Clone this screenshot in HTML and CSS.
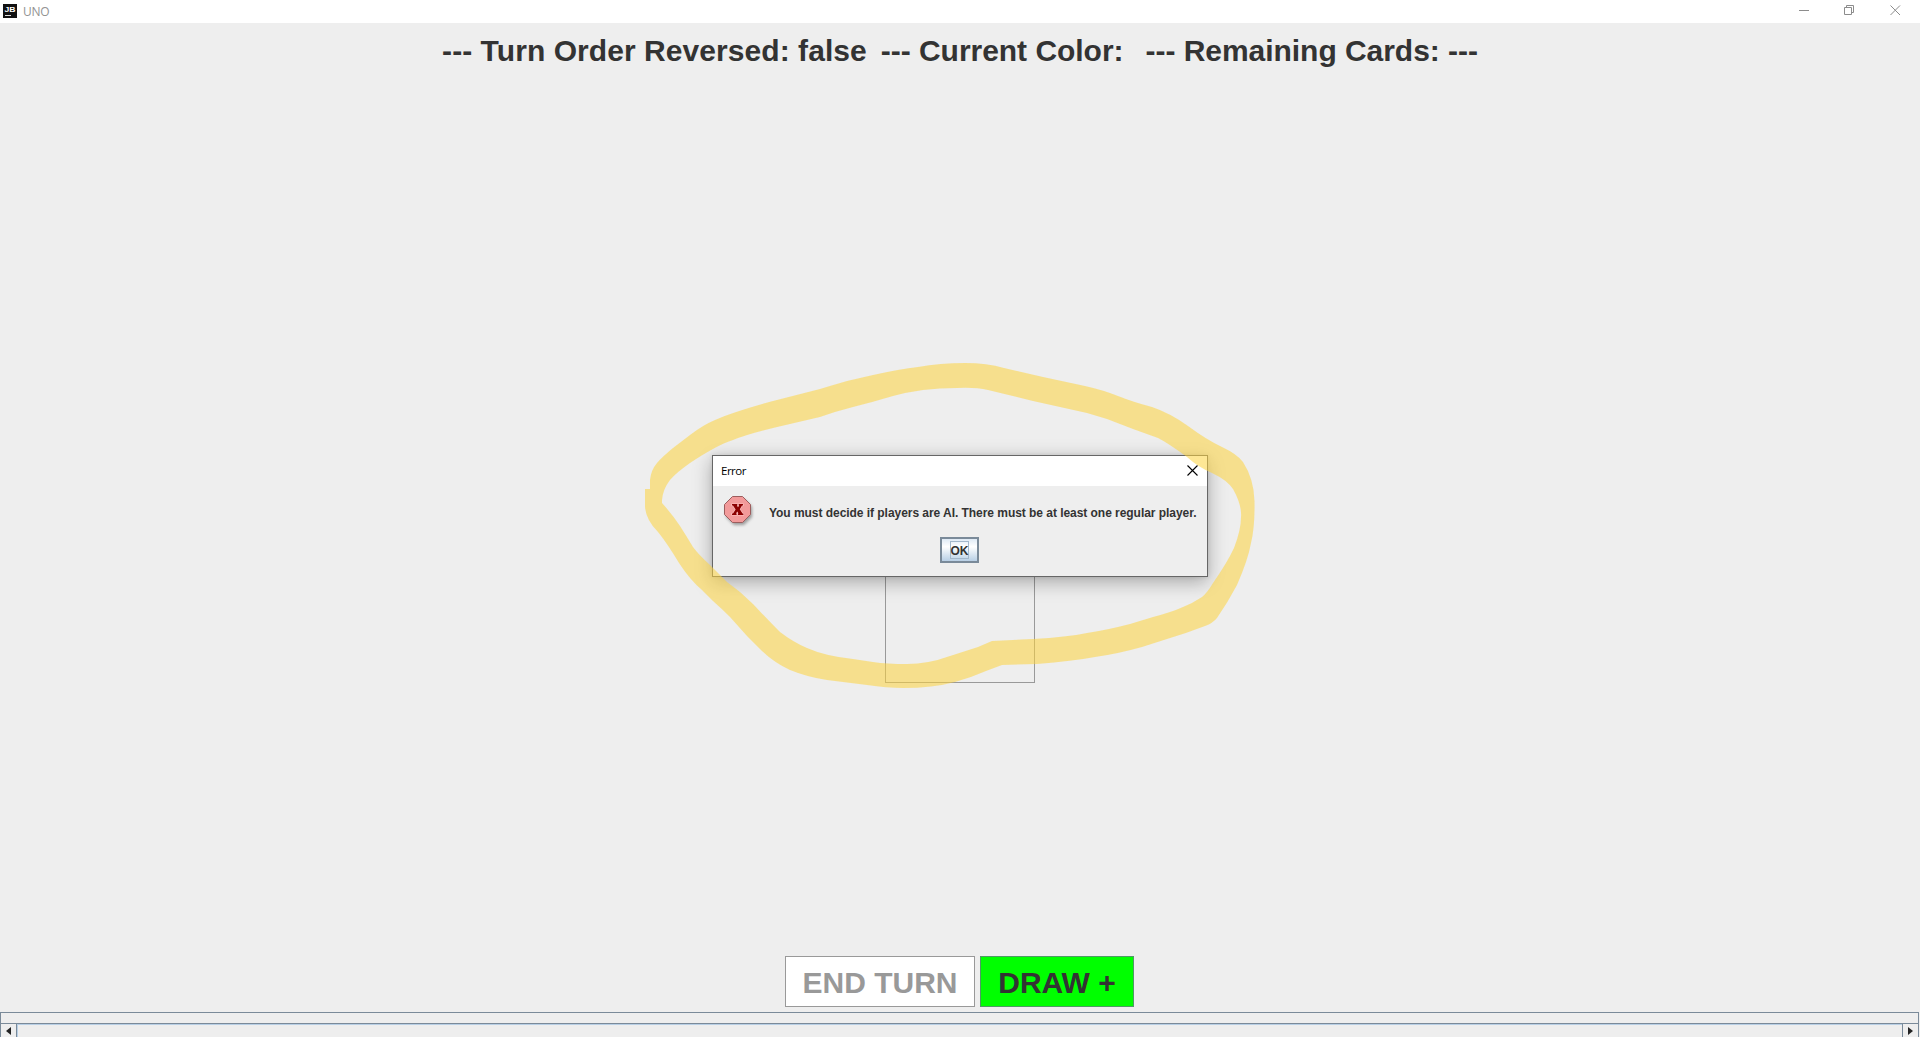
FILE: index.html
```html
<!DOCTYPE html>
<html lang="en">
<head>
<meta charset="utf-8">
<title>UNO</title>
<link rel="stylesheet" href="styles.css">
</head>
<body>
<div class="window">
  <header class="titlebar">
    <svg class="app-icon" width="14" height="14" viewBox="0 0 14 14"><rect width="14" height="14" fill="#111"/><text class="app-letters" x="1.500" y="8" textLength="11" lengthAdjust="spacingAndGlyphs">JB</text><rect x="2" y="11" width="6" height="1" fill="#ddd"/></svg>
    <span class="app-name">UNO</span>
    <svg class="controls" width="104" height="23" viewBox="0 0 104 23" fill="none" stroke="#8c8c8c"><path d="M1 10.500h10M46.500 7.500h7v7h-7zM48.500 7.500v-2h7v7h-2M92.500 5.500l9.500 9.500M102 5.500l-9.500 9.500"/></svg>
  </header>
  <main class="board">
    <h1 class="status"><span class="reversed">--- Turn Order Reversed: false</span><span class="color">--- Current Color:</span><span class="remaining">--- Remaining Cards: ---</span></h1>
    <div class="table"><div class="pile"></div></div>
    <div class="actions">
      <button class="action end-turn" disabled><span>END TURN</span></button>
      <button class="action draw"><span>DRAW +</span></button>
    </div>
  </main>
  <footer class="hand">
    <div class="hand-view"></div>
    <div class="scrollbar">
      <div class="arrow arrow-left"><svg width="5" height="8" viewBox="0 0 5 8"><path d="M5 0v8L0 4z"/></svg></div>
      <div class="track"></div>
      <div class="arrow arrow-right"><svg width="5" height="8" viewBox="0 0 5 8"><path d="M0 0v8l5-4z"/></svg></div>
    </div>
  </footer>
</div>

<section class="dialog">
  <div class="dialog-title"><span>Error</span><svg width="11" height="11" viewBox="0 0 11 11" stroke="#000" stroke-width="1.100"><path d="M.5.5l10 10M10.500.5l-10 10"/></svg></div>
  <div class="dialog-body">
    <div class="message-row">
      <svg class="error-icon" width="32" height="32" viewBox="0 0 32 32">
        <path class="icon-shadow" d="M10 3h10l8 8v10l-8 8H10l-8-8V11z"/>
        <path d="M8.500.5h10l8 8v10l-8 8h-10l-8-8v-10z" fill="#f29a9a" stroke="#9c5d5d"/>
        <path d="M8 8h5.300v1.500h-.4l1.100 1.800 1.200-1.800h-.5V8H19v1.500h-1l-2.200 3.700 2.700 4.300h.9V19h-5.500v-1.500h.5l-1.100-2-1.300 2h.6V19H8v-1.500h1l2.600-4L9 9.500H8z" fill="#8b0000" stroke="#ffc4c4" stroke-width="1.200" paint-order="stroke"/>
      </svg>
      <svg class="message" width="430" height="18"><text x="0" y="14" textLength="427.500">You must decide if players are AI. There must be at least one regular player.</text></svg>
    </div>
    <button class="ok"><span>OK</span></button>
  </div>
</section>

<svg class="marker" width="1920" height="1037" viewBox="0 0 1920 1037">
  <path fill-rule="evenodd" d="M645 489H650V480Q651 470 657 463Q662 457 673 448L690 435Q703 425 715 420Q733 412 773 401L820 389Q833 385 847 381Q860 378 873 375Q900 369 918 367Q940 363 965 363Q987 363 1004 368L1043 377L1085 386Q1103 390 1118 396Q1133 402 1152 407Q1170 413 1188 426Q1207 440 1222 447Q1237 454 1243 462Q1254 479 1254.500 501Q1255 527 1251 543Q1248 560 1237 585Q1228 602 1217 618Q1213 623 1205 626Q1187 633 1167 639L1142 647Q1117 654 1095 657Q1073 661 1037 664L1002 665L986 671Q970 678 955 682Q933 688 903 688Q887 688 867 685L827 680Q807 677 790 670Q773 662 760 649L747 636L730 617Q722 609 713 601L702 590Q690 580 679 563Q667 543 658 532Q646 520 645 507Z
  M662 500Q663 489 670 480Q677 472 690 463Q717 445 733 440Q750 433 790 424L820 417Q837 411 853 407Q873 402 893 396Q908 392 923 390Q940 388 957 388Q975 387 988 390L1033 401L1087 413L1107 419L1133 429L1158 438Q1168 443 1187 457Q1198 467 1212 473Q1227 480 1233 489Q1242 505 1241 517Q1241 530 1234 548Q1227 563 1213 583Q1207 593 1202 597Q1193 603 1183 607Q1172 612 1153 617L1130 624Q1107 630 1087 633Q1067 637 1033 639L992 641L978 647L950 656Q928 664 907 664Q887 664 873 662L853 659Q825 656 807 648Q793 642 780 632Q767 619 753 604L740 592L727 582L710 565Q698 554 693 547Q687 537 680 526Q672 514 662 503Z"/>
</svg>
</body>
</html>
```
FILE: styles.css
```css
* { box-sizing: border-box; }
body { margin: 0; overflow: hidden; font-family: "Liberation Sans", Arial, sans-serif; background: #eee; }
.window { width: 1920px; height: 1037px; display: flex; flex-direction: column; }
.titlebar { height: 23px; flex: none; background: #fff; display: flex; align-items: center; padding: 0 18px 0 3px; }
.app-icon { margin-top: -1px; }
.app-letters { font: bold 8px "Liberation Sans", sans-serif; fill: #fff; }
.app-name { font: 12px "Open Sans", sans-serif; color: #929292; margin-left: 6px; letter-spacing: -.3px; }
.controls { margin-left: auto; }
.board { flex: 1; min-height: 0; display: flex; flex-direction: column; align-items: center; }
.status { margin: 0; padding: 10px 0 0; height: 54px; display: flex; font-size: 30px; line-height: 36px; color: #333; white-space: pre; }
.reversed { letter-spacing: .06px; }
.color { margin-left: 14px; letter-spacing: -.03px; }
.remaining { margin-left: 22px; letter-spacing: -.04px; }
.table { flex: 1; padding-top: 405px; }
.pile { width: 150px; height: 201px; border: 1px solid #999; }
.actions { display: flex; gap: 5px; height: 56px; padding-right: 1px; }
.action { height: 51px; border: 1px solid #999; padding: 3px 0 0; font: bold 30px "Liberation Sans", Arial, sans-serif; color: #333; white-space: nowrap; }
.end-turn { width: 190px; background: #fff; color: #999; }
.draw { width: 154px; background: #0f0; border-color: #4f9a65; }
.hand { height: 25px; flex: none; display: flex; flex-direction: column; padding-right: 1px; }
.hand-view { height: 12px; border: 1px solid #7a8a99; }
.scrollbar { flex: 1; display: flex; border: solid #7a8a99; border-width: 0 1px; }
.arrow { width: 16px; display: flex; align-items: center; justify-content: center; padding-top: 1px; fill: #222; }
.arrow-left { border-right: 1px solid #7a8a99; padding-right: 1px; }
.arrow-right { border-left: 1px solid #7a8a99; }
.track { flex: 1; border-top: 1px solid #b8cfe5; border-left: 1px solid #b8cfe5; }
.dialog { position: absolute; left: 712px; top: 455px; width: 496px; height: 122px; border: 1px solid #666; background: #eee; box-shadow: 0 5px 18px rgba(0,0,0,.3), 0 0 4px rgba(0,0,0,.1); }
.dialog-title { height: 30px; background: #fff; display: flex; justify-content: space-between; align-items: center; padding: 0 9.500px 0 8px; font: 11.500px "Open Sans", sans-serif; color: #000; letter-spacing: -.5px; }
.dialog-title span { margin-top: -2px; }
.dialog-title svg { margin-top: -2px; }
.dialog-body { padding: 10px 0 0 11px; display: flex; flex-direction: column; }
.message-row { display: flex; height: 41px; }
.error-icon { overflow: visible; }
.icon-shadow { fill: rgba(0,0,0,.35); filter: blur(1.500px); }
.message { margin: 7px 0 0 13px; font-weight: bold; font-size: 12px; fill: #333; }
.ok { width: 39px; height: 26px; margin-left: 216px; border: 2px solid #7a8a99; padding: 0; display: flex; align-items: center; justify-content: center; background: linear-gradient(#dfeaf5, #fff 35%, #b8cfe5); font: bold 12px "Liberation Sans", Arial, sans-serif; color: #333; }
.ok span { border: 1px solid #a3b8cc; height: 18px; width: 19px; line-height: 18px; display: flex; justify-content: center; }
.marker { position: absolute; left: 0; top: 0; pointer-events: none; fill: rgba(254,211,62,.55); }
```
